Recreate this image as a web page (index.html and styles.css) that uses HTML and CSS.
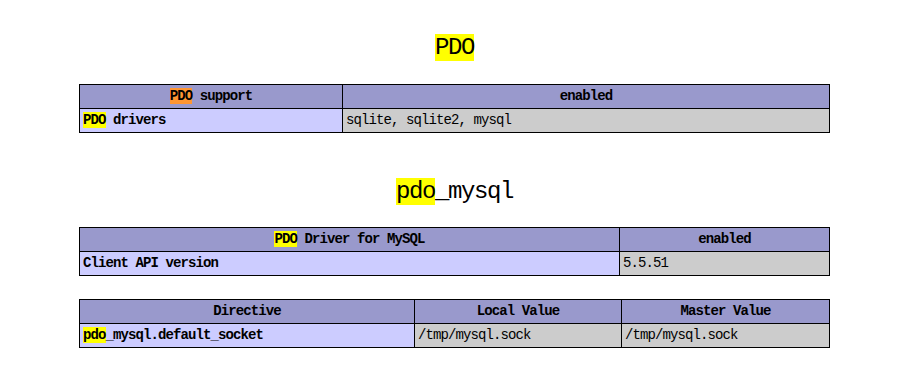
FILE: index.html
```html
<!DOCTYPE html>
<html>
<head>
<meta charset="utf-8">
<link rel="stylesheet" href="styles.css">
</head>
<body>
<div class="center">
  <h2><span class="hl">PDO</span></h2>
  <table>
    <colgroup><col class="c1a"><col></colgroup>
    <tr class="h"><th><span class="cur">PDO</span> support</th><th>enabled</th></tr>
    <tr><td class="e"><span class="hl">PDO</span> drivers</td><td class="v">sqlite, sqlite2, mysql</td></tr>
  </table>
  <h2 class="second"><span class="hl">pdo</span>_mysql</h2>
  <table>
    <colgroup><col class="c2a"><col></colgroup>
    <tr class="h"><th><span class="hl">PDO</span> Driver for MySQL</th><th>enabled</th></tr>
    <tr><td class="e">Client API version</td><td class="v">5.5.51</td></tr>
  </table>
  <table class="third">
    <colgroup><col class="c3a"><col class="c3b"><col></colgroup>
    <tr class="h"><th>Directive</th><th>Local Value</th><th>Master Value</th></tr>
    <tr><td class="e"><span class="hl">pdo</span>_mysql.default_socket</td><td class="v">/tmp/mysql.sock</td><td class="v">/tmp/mysql.sock</td></tr>
  </table>
</div>
</body>
</html>
```
FILE: styles.css
```css
html, body {
  margin: 0;
  padding: 0;
  background: #fff;
  color: #000;
}
.center {
  width: 751px;
  margin-left: 79px;
  font-family: "Liberation Mono", "DejaVu Sans Mono", monospace;
}
h2 {
  margin: 34px 0 22px;
  font-size: 24px;
  line-height: 28px;
  font-weight: normal;
  letter-spacing: -1.4px;
  text-align: center;
}
h2.second {
  margin-top: 45px;
  margin-bottom: 21px;
}
.hl { background: #ffff00; }
.cur { background: #ff9632; }
table {
  width: 751px;
  border-collapse: collapse;
  table-layout: fixed;
  font-size: 14px;
  letter-spacing: -0.9px;
}
table.third { margin-top: 23px; }
th, td {
  border: 1px solid #000;
  padding: 2px 3px;
  line-height: 19px;
  white-space: nowrap;
  overflow: hidden;
}
th {
  background: #9999cc;
  font-weight: bold;
  text-align: center;
}
td.e {
  background: #ccccff;
  font-weight: bold;
  text-align: left;
}
td.v {
  background: #cccccc;
  text-align: left;
}
.c1a { width: 263px; }
.c2a { width: 540px; }
.c3a { width: 335px; }
.c3b { width: 207px; }
```
